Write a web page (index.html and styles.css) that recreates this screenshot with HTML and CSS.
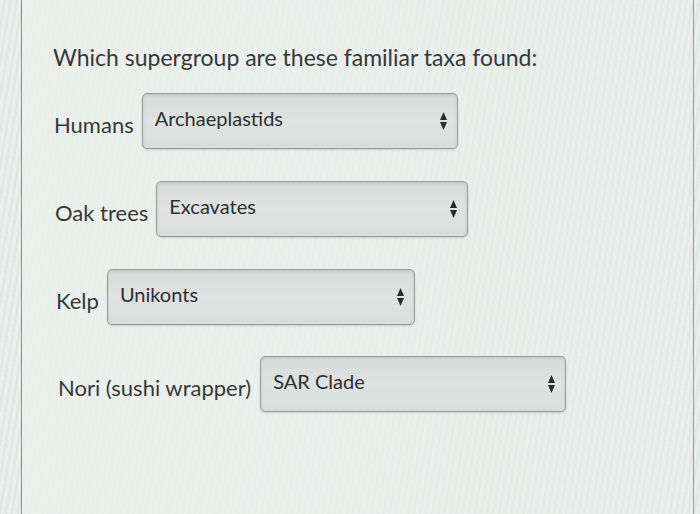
FILE: index.html
```html
<!DOCTYPE html>
<html>
<head>
<meta charset="utf-8">
<link rel="stylesheet" href="styles.css">
</head>
<body>
<div class="frame">
  <div class="panel">
    <p class="question">Which supergroup are these familiar taxa found:</p>
    <div class="row r1">
      <span class="label">Humans</span>
      <div class="select"><span class="value">Archaeplastids</span>
        <svg class="arrows" width="7" height="18" viewBox="0 0 7 18"><path d="M3.5 0 L7 8 L0 8 Z M0 10 L7 10 L3.5 18 Z" fill="#2a2c2b"/></svg>
      </div>
    </div>
    <div class="row r2">
      <span class="label">Oak trees</span>
      <div class="select"><span class="value">Excavates</span>
        <svg class="arrows" width="7" height="18" viewBox="0 0 7 18"><path d="M3.5 0 L7 8 L0 8 Z M0 10 L7 10 L3.5 18 Z" fill="#2a2c2b"/></svg>
      </div>
    </div>
    <div class="row r3">
      <span class="label">Kelp</span>
      <div class="select"><span class="value">Unikonts</span>
        <svg class="arrows" width="7" height="18" viewBox="0 0 7 18"><path d="M3.5 0 L7 8 L0 8 Z M0 10 L7 10 L3.5 18 Z" fill="#2a2c2b"/></svg>
      </div>
    </div>
    <div class="row r4">
      <span class="label">Nori (sushi wrapper)</span>
      <div class="select"><span class="value">SAR Clade</span>
        <svg class="arrows" width="7" height="18" viewBox="0 0 7 18"><path d="M3.5 0 L7 8 L0 8 Z M0 10 L7 10 L3.5 18 Z" fill="#2a2c2b"/></svg>
      </div>
    </div>
  </div>
</div>
</body>
</html>
```
FILE: styles.css
```css
html, body {
  margin: 0;
  padding: 0;
}
body {
  width: 700px;
  height: 514px;
  overflow: hidden;
  background: #e2e8e5;
  font-family: Lato, "Open Sans", sans-serif;
  color: #363938;
}
.frame {
  height: 514px;
  padding-left: 21px;
  padding-right: 6px;
  box-sizing: border-box;
  background: repeating-linear-gradient(100deg, #eaedeb 0px, #eaedeb 3px, #dbe8e3 4px, #dbe8e3 6px);
}
.panel {
  height: 514px;
  border-left: 1px solid #8a8e8c;
  border-right: 1px solid #9a9e9c;
  padding-left: 31px;
  padding-top: 42px;
  box-sizing: border-box;
  background: linear-gradient(90deg, rgba(238,240,238,0.8) 0%, rgba(238,240,238,0.6) 55%, rgba(238,240,238,0.2) 100%);
}
.question {
  margin: 0 0 21px 0;
  font-size: 23px;
  line-height: 30px;
}
.row {
  display: flex;
  align-items: flex-start;
  gap: 8px;
  height: 56px;
  margin-bottom: 32px;
}
.r1 { padding-left: 1px; }
.r2 { padding-left: 2px; }
.r3 { padding-left: 3px; }
.r4 { padding-left: 5px; gap: 9px; margin-top: -1px; }
.label {
  font-size: 22px;
  line-height: 26px;
  padding-top: 19px;
}
.select {
  box-sizing: border-box;
  height: 56px;
  border: 1px solid #9b9e9c;
  border-radius: 5px;
  background: linear-gradient(180deg, #d8dbda 0%, #dfe2e1 50%, #d9dddc 100%);
  box-shadow: 0 1px 2px rgba(0,0,0,0.15), inset 0 1px 3px rgba(0,0,0,0.12);
  display: flex;
  align-items: flex-start;
  justify-content: space-between;
  padding: 12px 10px 0 12px;
}
.r1 .select { width: 316px; }
.r2 .select { width: 312px; }
.r3 .select { width: 308px; }
.r4 .select { width: 306px; }
.value {
  font-size: 20px;
  line-height: 24px;
  color: #2e302f;
}
.arrows {
  align-self: center;
  margin-top: -12px;
}
```
